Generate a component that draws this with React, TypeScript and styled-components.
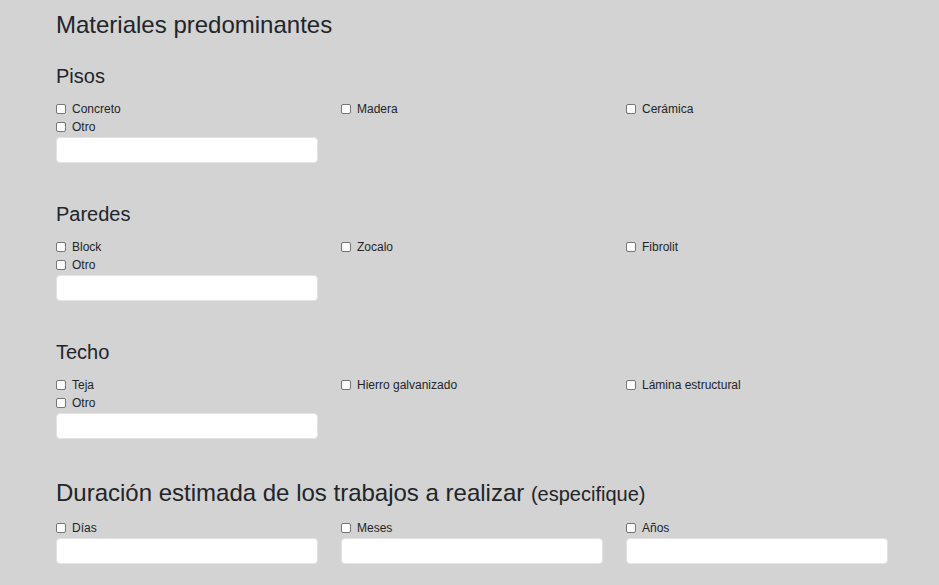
import styled, { createGlobalStyle } from 'styled-components'

const GlobalStyle = createGlobalStyle`
  html, body {
    margin: 0;
    padding: 0;
    background: #d3d3d3;
  }
  body {
    font-family: "Liberation Sans", Arial, sans-serif;
    color: #212529;
  }
`

const Page = styled.div`
  padding: 11px 0 0 56px;
  width: 832px;
`

const Title = styled.h2`
  margin: 0 0 24px;
  font-size: 24px;
  font-weight: 400;
  line-height: 1.2;
`

const Small = styled.span`
  font-size: 20px;
`

const Section = styled.section`
  margin-bottom: 39px;
`

const Duration = styled.section`
  padding-top: 1px;

  ${Title} {
    margin-bottom: 11px;
  }
`

const SubTitle = styled.h3`
  margin: 0 0 12px;
  font-size: 20px;
  font-weight: 400;
  line-height: 24px;
`

const Grid = styled.div`
  display: grid;
  grid-template-columns: repeat(3, 262px);
  column-gap: 23px;
`

const Check = styled.label`
  display: flex;
  align-items: center;
  height: 18px;
  font-size: 12px;
  line-height: 18px;
`

const Box = styled.input.attrs({ type: 'checkbox' })`
  appearance: none;
  width: 10px;
  height: 10px;
  margin: 1px 6px 0 0;
  border: 1px solid #767676;
  border-radius: 2px;
  background: #fff;
  box-sizing: border-box;
`

const TextInput = styled.input.attrs({ type: 'text' })`
  display: block;
  width: 262px;
  height: 26px;
  margin: 1px 0 0;
  box-sizing: border-box;
  border: 1px solid #e3e3e3;
  border-radius: 4px;
  background: #fff;
  padding: 0 8px;
  font: inherit;
  font-size: 12px;
`

type Material = {
  title: string
  options: string[]
}

const materials: Material[] = [
  { title: 'Pisos', options: ['Concreto', 'Madera', 'Cerámica'] },
  { title: 'Paredes', options: ['Block', 'Zocalo', 'Fibrolit'] },
  { title: 'Techo', options: ['Teja', 'Hierro galvanizado', 'Lámina estructural'] },
]

const CheckItem = ({ label }: { label: string }) => (
  <Check>
    <Box />
    {label}
  </Check>
)

export default function App() {
  return (
    <>
      <GlobalStyle />
      <Page>
        <Title>Materiales predominantes</Title>
        {materials.map((m) => (
          <Section key={m.title}>
            <SubTitle>{m.title}</SubTitle>
            <Grid>
              {m.options.map((o) => (
                <CheckItem key={o} label={o} />
              ))}
            </Grid>
            <CheckItem label="Otro" />
            <TextInput />
          </Section>
        ))}
        <Duration>
          <Title>
            Duración estimada de los trabajos a realizar <Small>(especifique)</Small>
          </Title>
          <Grid>
            {['Días', 'Meses', 'Años'].map((d) => (
              <div key={d}>
                <CheckItem label={d} />
                <TextInput />
              </div>
            ))}
          </Grid>
        </Duration>
      </Page>
    </>
  )
}
